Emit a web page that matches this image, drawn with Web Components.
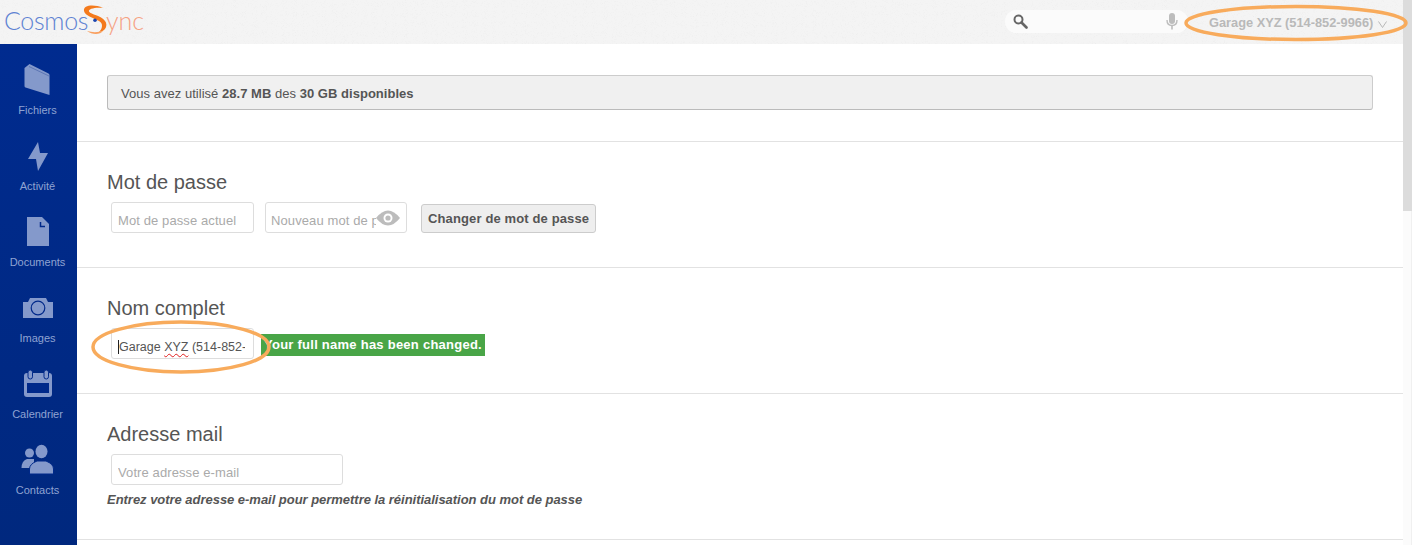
<!DOCTYPE html>
<html lang="fr">
<head>
<meta charset="utf-8">
<title>CosmosSync</title>
<style>
    html, body { margin: 0; height: 100%; overflow: hidden; background: #fff; }
    body { font-family: "Liberation Sans", Arial, sans-serif; color: #555; }
</style>
</head>
<body>
<cs-app>
    <cs-header slot="header" user="Garage XYZ (514-852-9966)"></cs-header>
    <cs-sidebar slot="sidebar">
        <cs-nav-item label="Fichiers">
            <svg viewBox="0 0 34 36" width="34" height="36"><path d="M3.500 6 L8.500 2 L16.500 6 L27.500 11.500 Q28.500 12 28.500 13 L28.500 33 L4.500 25.500 Q3.500 25 3.500 24 Z" fill="currentColor"/><path d="M8 4.500 L28 14" stroke="#5d76b4" stroke-width="1" fill="none"/></svg>
        </cs-nav-item>
        <cs-nav-item label="Activité">
            <svg viewBox="0 0 34 36" width="34" height="36"><path d="M17 4 L7 21 L15 21 L17 33 L27 15 L19 15 Z" fill="currentColor"/></svg>
        </cs-nav-item>
        <cs-nav-item label="Documents">
            <svg viewBox="0 0 34 36" width="34" height="36"><path d="M6 3 L21 3 L28 10 L28 32 L6 32 Z" fill="currentColor"/><path d="M19.500 8 L19.500 12.500 L24 12.500" stroke="#00298a" stroke-width="1.500" fill="none"/></svg>
        </cs-nav-item>
        <cs-nav-item label="Images">
            <svg viewBox="0 0 34 36" width="34" height="36"><path d="M2 12 L7 12 L9 8 L25 8 L27 12 L32 12 L32 28 L2 28 Z" fill="currentColor"/><circle cx="17" cy="18" r="6.800" fill="none" stroke="#00298a" stroke-width="1.200"/></svg>
        </cs-nav-item>
        <cs-nav-item label="Calendrier">
            <svg viewBox="0 0 34 36" width="34" height="36"><rect x="3" y="7" width="28" height="24" rx="3" fill="currentColor"/><rect x="6" y="17" width="22" height="10" fill="#00298a"/><rect x="7" y="4" width="4.500" height="9" rx="2.200" fill="currentColor" stroke="#00298a" stroke-width="1"/><rect x="23" y="4" width="4.500" height="9" rx="2.200" fill="currentColor" stroke="#00298a" stroke-width="1"/></svg>
        </cs-nav-item>
        <cs-nav-item label="Contacts">
            <svg viewBox="0 0 34 36" width="34" height="36"><circle cx="8.500" cy="11" r="4.500" fill="currentColor"/><path d="M.5 26 Q.5 19 6 17 L13 17 L13 26 Z" fill="currentColor"/><ellipse cx="20.500" cy="9.500" rx="6" ry="6.800" fill="currentColor"/><path d="M8.500 32 L8.500 27 Q8.500 22 16 19 L25 19 Q32.500 22 32.500 27 L32.500 32 Z" fill="currentColor" stroke="#00298a" stroke-width="1"/></svg>
        </cs-nav-item>
    </cs-sidebar>

    <cs-section height="98">
        <cs-quota>Vous avez utilisé <b>28.7 MB</b> des <b>30 GB disponibles</b></cs-quota>
    </cs-section>
    <cs-section title="Mot de passe" height="126">
        <cs-row>
            <cs-field width="143">Mot de passe actuel</cs-field>
            <cs-field width="142" eye>Nouveau mot de passe</cs-field>
            <cs-button>Changer de mot de passe</cs-button>
        </cs-row>
    </cs-section>
    <cs-section title="Nom complet" height="126">
        <cs-row>
            <cs-field width="143" filled caret>Garage <span style="text-decoration: underline wavy #e02020 1px; text-underline-offset: 2px">XYZ</span> (514-852-</cs-field>
            <cs-notice>Your full name has been changed.</cs-notice>
        </cs-row>
    </cs-section>
    <cs-section title="Adresse mail" height="146">
        <cs-row><cs-field width="232">Votre adresse e-mail</cs-field></cs-row>
        <cs-hint>Entrez votre adresse e-mail pour permettre la réinitialisation du mot de passe</cs-hint>
    </cs-section>
</cs-app>

<script>
// small helper so every element below reads the same
const define = (name, css, html) => {
    customElements.define(name, class extends HTMLElement {
        constructor() {
            super();
            this.attachShadow({ mode: 'open' });
        }
        connectedCallback() {
            const markup = typeof html === 'function' ? html(this) : html;
            this.shadowRoot.innerHTML = `<style>${css}</style>${markup}`;
        }
    });
};

define('cs-app', `
    :host { display: flex; width: 1412px; height: 545px; overflow: hidden; position: relative; }
    .page { flex: 1; display: flex; flex-direction: column; min-width: 0; }
    .body { flex: 1; display: flex; min-height: 0; }
    main { flex: 1; min-width: 0; }
    .scroll { width: 9px; background: #fbfbfb; border-right: 1px solid #f0f0f0; box-sizing: border-box; }
    .thumb { height: 211px; width: 9px; background: #dcdcdc; }
    svg.mark { position: absolute; overflow: visible; pointer-events: none; }
`, `
    <div class="page">
        <slot name="header"></slot>
        <div class="body">
            <slot name="sidebar"></slot>
            <main><slot></slot></main>
        </div>
    </div>
    <div class="scroll"><div class="thumb"></div></div>
    <!-- orange hand drawn circles, they lie over the page -->
    <svg class="mark" style="left:1184px;top:4px" width="224" height="38" viewBox="0 0 224 38"><ellipse cx="112" cy="19" rx="110" ry="16.500" fill="none" stroke="#f8ab5c" stroke-width="3.500"/></svg>
    <svg class="mark" style="left:91px;top:320px" width="180" height="54" viewBox="0 0 180 54"><ellipse cx="90" cy="27" rx="88" ry="25" fill="none" stroke="#f8ab5c" stroke-width="3.500"/></svg>
`);

define('cs-header', `
    :host { display: flex; align-items: center; height: 44px; background: #f4f4f4; position: relative; flex: none; }
    .grain { position: absolute; inset: 0; width: 100%; height: 100%; opacity: .12; }
    .logo { position: relative; display: flex; align-items: center; margin-left: 4px; font: 300 25px Lato, "Open Sans", sans-serif; line-height: 40px; height: 40px; margin-top: -4px; }
    .logo .a { color: #5f83d3; letter-spacing: -.3px; width: 83px; }
    .logo .b { color: #f6a183; margin-left: 19px; }
    .logo svg { position: absolute; left: 80px; top: 4px; overflow: visible; }
    .search { position: relative; margin-left: auto; width: 183px; height: 23px; border-radius: 12px; background: #fbfbfb; display: flex; align-items: center; justify-content: space-between; padding: 0 10px 0 8px; box-sizing: border-box; top: -1px; }
    .user { position: relative; width: 215px; padding-left: 21px; box-sizing: border-box; font: bold 12.800px "Liberation Sans", Arial, sans-serif; color: #b9b9b9; display: flex; align-items: center; white-space: nowrap; }
    .user svg { margin-left: 5px; margin-top: 5px; }
`, el => `
    <svg class="grain"><filter id="n"><feTurbulence baseFrequency="1.100" numOctaves="2"/><feColorMatrix values="0 0 0 0 .5 0 0 0 0 .5 0 0 0 0 .5 0 0 0 1.500 -.4"/></filter><rect width="100%" height="100%" filter="url(#n)"/></svg>
    <div class="logo">
        <span class="a">Cosmos</span>
        <svg width="26" height="32" viewBox="0 0 26 32">
            <path d="M19 4 C10 0 -1 1 0 7 C1 12 10 14 15 17 C19 19 19 24 15 28 C22 27 24 21 21 17 C17 11 7 11 5 7.500 C4 5 11 3 19 4 Z" fill="#f47a1c"/>
            <path d="M3 27 C8 31 16 31 19 27 C14 28.500 8 28.500 3 27 Z" fill="#f9a060"/>
            <circle cx="11" cy="16.300" r="1.800" fill="#1c46b0"/>
        </svg>
        <span class="b">ync</span>
    </div>
    <div class="search">
        <svg width="15" height="15" viewBox="0 0 15 15"><circle cx="5.500" cy="5.500" r="4" fill="none" stroke="#666" stroke-width="2"/><path d="M8.500 8.500 L13.500 13.500" stroke="#666" stroke-width="2.600" stroke-linecap="round"/></svg>
        <svg width="12" height="17" viewBox="0 0 12 17"><rect x="3" y="0" width="6" height="11" rx="3" fill="#bdbdbd"/><path d="M1 7 Q1 12.500 6 12.500 Q11 12.500 11 7" fill="none" stroke="#bdbdbd" stroke-width="1.400"/><path d="M6 12.500 L6 16.500" stroke="#bdbdbd" stroke-width="1.600"/></svg>
    </div>
    <div class="user">${el.getAttribute('user')}<svg width="9" height="7" viewBox="0 0 9 7"><path d="M.5 .5 L4.500 6.500 L8.500 .5" fill="none" stroke="#b9b9b9" stroke-width="1"/></svg></div>
`);

define('cs-sidebar', `
    :host { display: flex; flex-direction: column; flex: none; width: 77px; padding: 16px 2px 0 0; box-sizing: border-box; background: linear-gradient(#002b8f, #00287e); }
`, `<slot></slot>`);

define('cs-nav-item', `
    :host { display: flex; flex-direction: column; align-items: center; height: 76px; color: #8499cb; font-size: 11px; }
    .icon { height: 36px; margin-top: 2px; margin-bottom: 5px; }
    ::slotted(svg) { display: block; overflow: visible; }
    span { line-height: 14px; color: #8fa3d2; }
`, el => `<div class="icon"><slot></slot></div><span>${el.getAttribute('label')}</span>`);

define('cs-section', `
    :host { display: flow-root; box-sizing: border-box; padding: 0 30px; border-bottom: 1px solid #e2e2e2; }
    h2 { margin: 0; padding-top: 28px; font-size: 20px; font-weight: normal; line-height: 24px; color: #555; }
`, el => `
    <style>:host { height: ${el.getAttribute('height')}px; }</style>
    ${el.getAttribute('title') ? `<h2>${el.getAttribute('title')}</h2>` : ''}
    <slot></slot>
`);

define('cs-quota', `
    :host { display: block; height: 35px; margin: 31px 0 0 0; width: 1266px; box-sizing: border-box; padding-left: 13px; line-height: 35px; font-size: 13px; letter-spacing: .03px; color: #555; background: #f0f0f0; border: 1px solid #ccc; border-bottom-color: #bbb; border-left-color: #bbb; border-radius: 3px; }
`, `<slot></slot>`);

define('cs-row', `
    :host { display: flex; align-items: center; margin: 8px 0 0 4px; }
`, `<slot></slot>`);

define('cs-field', `
    :host { display: block; position: relative; height: 31px; box-sizing: border-box; border: 1px solid #ddd; border-radius: 3px; background: #fff; padding: 0 8px 0 6px; line-height: 35px; font-size: 13px; letter-spacing: .1px; color: #aaa; white-space: nowrap; flex: none; }
    :host([filled]) { color: #555; font-size: 12.500px; letter-spacing: 0; line-height: 36px; }
    :host([eye]) { margin-left: 11px; padding-left: 5px; }
    :host([caret]) .text { border-left: 1px solid #222; }
    .clip { overflow: hidden; height: 100%; }
    :host([eye]) .clip { margin-right: 22px; }
    svg { position: absolute; right: 6px; top: 7px; }
`, el => `
    <style>:host { width: ${el.getAttribute('width')}px; }</style>
    <div class="clip"><span class="text"><slot></slot></span></div>
    ${el.hasAttribute('eye') ? `<svg width="24" height="16" viewBox="0 0 24 16"><path d="M0 8 Q12 -7 24 8 Q12 23 0 8 Z" fill="#bcbcbc"/><circle cx="12" cy="8" r="4.500" fill="#fff"/><circle cx="12" cy="8" r="2.600" fill="#bcbcbc"/></svg>` : ''}
`);

define('cs-button', `
    :host { display: block; margin-left: 14px; margin-top: 1px; height: 29px; box-sizing: border-box; padding: 0 6px; line-height: 28px; font-size: 13px; letter-spacing: .13px; font-weight: bold; color: #555; background: #eee; border: 1px solid #ccc; border-radius: 3px; white-space: nowrap; flex: none; }
`, `<slot></slot>`);

define('cs-notice', `
    :host { display: block; margin-left: 7px; margin-top: 2px; height: 22px; padding: 0 3px; line-height: 21px; font-size: 13px; letter-spacing: .25px; font-weight: bold; color: #fff; background: #49a547; white-space: nowrap; flex: none; }
`, `<slot></slot>`);

define('cs-hint', `
    :host { display: block; margin-top: 7px; font-size: 13px; letter-spacing: -.03px; line-height: 16px; font-style: italic; font-weight: bold; color: #555; }
`, `<slot></slot>`);
</script>
</body>
</html>
